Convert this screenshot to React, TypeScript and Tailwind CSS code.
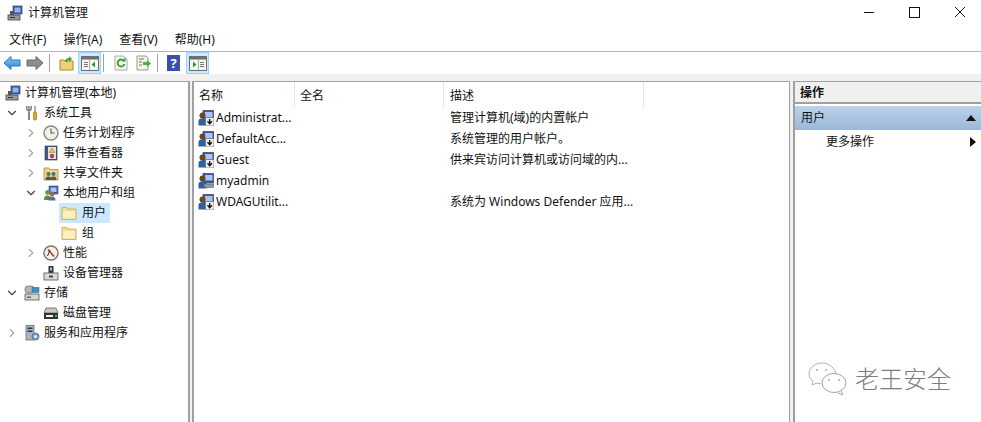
import React from "react";
import { ChevronDown, ChevronRight } from "lucide-react";

const FONT = "font-['Noto_Sans','Noto_Sans_CJK_SC',sans-serif]";

function MmcIcon({ size = 16 }: { size?: number }) {
  return (
    <svg width={size} height={size} viewBox="0 0 16 16" className="shrink-0">
      <rect x="6" y="1" width="9" height="8" fill="#2b4fb8" stroke="#555" strokeWidth="0.8" />
      <rect x="7.5" y="2.5" width="6" height="5" fill="#8fb4ee" />
      <rect x="1" y="10" width="12" height="5" fill="#9a9a9a" stroke="#444" strokeWidth="0.8" />
      <rect x="3" y="6" width="4" height="4" fill="#555" />
      <rect x="3" y="12" width="5" height="1" fill="#333" />
    </svg>
  );
}

function UserIcon({ down = true }: { down?: boolean }) {
  return (
    <svg width="16" height="16" viewBox="0 0 16 16" className="shrink-0">
      <rect x="5" y="0.500" width="10.500" height="9.500" fill="#2f57c0" stroke="#444" strokeWidth="0.7" />
      <rect x="7" y="2" width="7.500" height="5.500" fill="#a9c6f2" />
      <circle cx="4.500" cy="5.500" r="3" fill="#6e4522" />
      <path d="M0.500 15.500v-4.500c0-2 1.700-2.800 4-2.800S8.500 9 8.500 11v4.500z" fill="#2f5f9e" />
      {down ? (
        <>
          <rect x="7.500" y="7.500" width="8.500" height="8.500" rx="1" fill="#efefef" stroke="#666" strokeWidth="0.7" />
          <path d="M11.700 9v4.500M9.500 11.300l2.200 2.500 2.200-2.500" stroke="#111" strokeWidth="1.300" fill="none" />
        </>
      ) : (
        <rect x="6" y="11" width="9.500" height="3.500" fill="#999" stroke="#555" strokeWidth="0.6" />
      )}
    </svg>
  );
}

function FolderIcon() {
  return (
    <svg width="16" height="14" viewBox="0 0 16 14" className="shrink-0">
      <path d="M1 1.500h5l1 1.500h8v10.500H1z" fill="#f5dc95" stroke="#d0b36a" strokeWidth="1" />
      <path d="M2 5h12v7.500H2z" fill="#fcefc4" />
    </svg>
  );
}

function TreeIcon({ kind }: { kind: string }) {
  if (kind === "root") return <MmcIcon />;
  if (kind === "folder") return <FolderIcon />;
  return (
    <svg width="16" height="16" viewBox="0 0 16 16" className="shrink-0">
      {kind === "tools" && (
        <>
          <path d="M5 1v6M3 1c-1 2 0 4 2 5 2-1 3-3 2-5" stroke="#777" strokeWidth="1.200" fill="#ddd" />
          <rect x="4" y="7" width="2" height="8" fill="#888" />
          <path d="M11 1v6" stroke="#999" strokeWidth="1.600" />
          <rect x="9.500" y="7" width="3" height="8" rx="1" fill="#e8a912" stroke="#8a6508" strokeWidth="0.600" />
        </>
      )}
      {kind === "clock" && (
        <>
          <circle cx="8" cy="8" r="7" fill="#f2efe6" stroke="#8a8a80" strokeWidth="1.400" />
          <path d="M8 3.500V8h3.500" stroke="#555" strokeWidth="1.100" fill="none" />
        </>
      )}
      {kind === "event" && (
        <>
          <rect x="2" y="1" width="12" height="14" fill="#3e5a90" stroke="#333" strokeWidth="0.600" />
          <rect x="5" y="2" width="8" height="12" fill="#dde3ee" />
          <path d="M9 3l3 4.500H6z" fill="#f2c21a" stroke="#8a6d08" strokeWidth="0.400" />
          <circle cx="9" cy="11" r="2.200" fill="#c63a3a" />
        </>
      )}
      {kind === "share" && (
        <>
          <path d="M1 3h5l1 1.500h8V15H1z" fill="#ecd28a" stroke="#a98c46" strokeWidth="0.800" />
          <circle cx="5.500" cy="9" r="2" fill="#3f7f4a" />
          <circle cx="10.500" cy="9" r="2" fill="#3f6f9f" />
          <path d="M2.500 15c0-3 1.500-3.500 3-3.500s3 .5 3 3.500zM7.500 15c0-3 1.500-3.500 3-3.500s3 .5 3 3.500z" fill="#555" />
        </>
      )}
      {kind === "users" && (
        <>
          <rect x="6" y="1" width="9" height="8" fill="#2f57c0" stroke="#555" strokeWidth="0.600" />
          <rect x="7.500" y="2.500" width="6" height="4.500" fill="#a9c6f2" />
          <circle cx="4.500" cy="7.500" r="2.400" fill="#6a9a5a" />
          <circle cx="9" cy="9" r="2.400" fill="#9a6a3a" />
          <path d="M1 15c0-3.500 1.500-4.500 3.500-4.500S8 11.500 8 15z" fill="#5c8a50" />
          <path d="M5.500 15.500c0-3 1.500-4 3.500-4s3.500 1 3.500 4z" fill="#5b6f95" />
        </>
      )}
      {kind === "perf" && (
        <>
          <circle cx="8" cy="8" r="7" fill="#f4f1e8" stroke="#77736a" strokeWidth="1.400" />
          <path d="M5 4.500l6 7" stroke="#c92e2e" strokeWidth="1.600" />
          <path d="M4.500 11l2.500-6" stroke="#333" strokeWidth="1" />
        </>
      )}
      {kind === "device" && (
        <>
          <rect x="5.500" y="1" width="5" height="7" fill="#333" />
          <rect x="7" y="2.500" width="2" height="3" fill="#bbb" />
          <rect x="1" y="8" width="14" height="7" fill="#d8d8d8" stroke="#555" strokeWidth="0.800" />
          <rect x="6" y="10.500" width="4" height="2" fill="#444" />
        </>
      )}
      {kind === "storage" && (
        <>
          <rect x="1" y="1" width="9" height="7" rx="3" fill="#b8b8b0" stroke="#666" strokeWidth="0.700" />
          <rect x="8" y="2.500" width="7" height="5" fill="#3b8fcf" stroke="#456" strokeWidth="0.500" />
          <rect x="1" y="9" width="14" height="6" fill="#d4d4d0" stroke="#555" strokeWidth="0.800" />
          <rect x="3" y="11.500" width="4" height="1.500" fill="#666" />
        </>
      )}
      {kind === "disk" && (
        <>
          <path d="M3 3h10l2 5H1z" fill="#c9c9c9" stroke="#555" strokeWidth="0.700" />
          <rect x="1" y="8" width="14" height="6" fill="#333" />
          <rect x="3" y="10" width="7" height="2" fill="#eee" />
          <rect x="12" y="10" width="2" height="2" fill="#3fbf3f" />
        </>
      )}
      {kind === "service" && (
        <>
          <rect x="2" y="0.500" width="8" height="14.500" fill="#a9b4c2" stroke="#566" strokeWidth="0.700" />
          <rect x="3.500" y="2.500" width="5" height="1.500" fill="#334" />
          <rect x="3.500" y="5.500" width="5" height="1.500" fill="#334" />
          <circle cx="11.500" cy="11.500" r="3.500" fill="#7da4cf" stroke="#44658a" strokeWidth="0.800" />
          <circle cx="11.500" cy="11.500" r="1.200" fill="#fff" />
        </>
      )}
    </svg>
  );
}

type Node = { label: string; icon: string; level: number; arrow?: "open" | "closed"; selected?: boolean };

const tree: Node[] = [
  { label: "计算机管理(本地)", icon: "root", level: 0 },
  { label: "系统工具", icon: "tools", level: 1, arrow: "open" },
  { label: "任务计划程序", icon: "clock", level: 2, arrow: "closed" },
  { label: "事件查看器", icon: "event", level: 2, arrow: "closed" },
  { label: "共享文件夹", icon: "share", level: 2, arrow: "closed" },
  { label: "本地用户和组", icon: "users", level: 2, arrow: "open" },
  { label: "用户", icon: "folder", level: 3, selected: true },
  { label: "组", icon: "folder", level: 3 },
  { label: "性能", icon: "perf", level: 2, arrow: "closed" },
  { label: "设备管理器", icon: "device", level: 2 },
  { label: "存储", icon: "storage", level: 1, arrow: "open" },
  { label: "磁盘管理", icon: "disk", level: 2 },
  { label: "服务和应用程序", icon: "service", level: 1, arrow: "closed" },
];

const users = [
  { name: "Administrat...", desc: "管理计算机(域)的内置帐户", down: true },
  { name: "DefaultAcc...", desc: "系统管理的用户帐户。", down: true },
  { name: "Guest", desc: "供来宾访问计算机或访问域的内...", down: true },
  { name: "myadmin", desc: "", down: false },
  { name: "WDAGUtilit...", desc: "系统为 Windows Defender 应用...", down: true },
];

function TreeRow({ node }: { node: Node }) {
  const pad = ["pl-[5px]", "pl-[5px]", "pl-[24px]", "pl-[60px]"][node.level];
  return (
    <div className={`flex h-5 items-center ${pad}`}>
      {node.level > 0 && node.level < 3 && (
        <span className="flex w-[19px] shrink-0 items-center">
          {node.arrow === "open" && <ChevronDown size={14} strokeWidth={2} className="text-[#444]" />}
          {node.arrow === "closed" && <ChevronRight size={14} strokeWidth={2} className="text-[#a6a6a6]" />}
        </span>
      )}
      {node.selected ? (
        <div className="-ml-px flex h-5 items-center gap-[5px] bg-[#cce8ff] pr-1 pl-[2px]">
          <TreeIcon kind={node.icon} />
          <span>{node.label}</span>
        </div>
      ) : (
        <div className={`flex items-center ${node.level === 3 ? "gap-[5px] pl-px" : "gap-1"}`}>
          <TreeIcon kind={node.icon} />
          <span>{node.label}</span>
        </div>
      )}
    </div>
  );
}

function ToolbarSeparator({ className }: { className: string }) {
  return <div className={`h-[18px] w-px bg-[#a0a0a0] ${className}`} />;
}

function ToolButton({ active, className, children }: { active?: boolean; className?: string; children: React.ReactNode }) {
  return (
    <div className={`flex h-[22px] w-[23px] items-center justify-center ${active ? "border border-[#99d1ff] bg-[#cce8ff]" : ""} ${className ?? ""}`}>
      {children}
    </div>
  );
}

function WindowGlyph({ side }: { side: "left" | "right" }) {
  return (
    <svg width="18" height="15" viewBox="0 0 18 15">
      <rect x="0.500" y="0.500" width="17" height="14" fill="#f6f6f2" stroke="#6f6f6f" />
      <rect x="1" y="1" width="16" height="2.500" fill="#6d6d6d" />
      {side === "left" ? (
        <>
          <path d="M3 6.500h4M3 8.500h4M3 10.500h4" stroke="#777" />
          <path d="M14 5.500v6l-3.500-3z" fill="#2e9a48" />
          <path d="M8.500 4v10" stroke="#aaa" />
        </>
      ) : (
        <>
          <path d="M11 6.500h4M11 8.500h4M11 10.500h4" stroke="#777" />
          <path d="M4 5.500v6l3.500-3z" fill="#2e9a48" />
          <path d="M9.500 4v10" stroke="#aaa" />
        </>
      )}
    </svg>
  );
}

export default function App() {
  return (
    <div className={`flex h-[422px] w-[981px] flex-col overflow-hidden bg-white text-[12px] text-[#111] ${FONT}`}>
      {/* Title bar */}
      <div className="flex h-[29px] shrink-0 items-start pl-[7px]">
        <div className="mt-1 flex items-center">
          <MmcIcon />
          <span className="ml-[5px] mt-px leading-4">计算机管理</span>
        </div>
        <div className="ml-auto flex">
          <svg width="46" height="24" viewBox="0 0 46 24">
            <path d="M21 12.500h10" stroke="#111" />
          </svg>
          <svg width="46" height="24" viewBox="0 0 46 24">
            <rect x="20.500" y="7.500" width="10" height="10" fill="none" stroke="#111" />
          </svg>
          <svg width="46" height="24" viewBox="0 0 46 24">
            <path d="M20 7l10 10M30 7L20 17" stroke="#111" />
          </svg>
        </div>
      </div>

      {/* Menu */}
      <div className="flex h-[23px] shrink-0 items-center gap-[17px] border-b border-[#b4b4c0] pl-[9px]">
        <span>文件(F)</span>
        <span>操作(A)</span>
        <span>查看(V)</span>
        <span>帮助(H)</span>
      </div>

      {/* Toolbar */}
      <div className="flex h-[22px] shrink-0 items-center pl-[3px]">
        <svg width="18" height="16" viewBox="0 0 18 16" className="mr-[5px]">
          <defs>
            <linearGradient id="backFill" x1="0" y1="0" x2="0" y2="1">
              <stop offset="0" stopColor="#8cc8f5" />
              <stop offset="1" stopColor="#2a86d8" />
            </linearGradient>
          </defs>
          <path d="M1 8l7-6.500v3.500h9v6H8v3.500z" fill="url(#backFill)" stroke="#2a78bd" />
        </svg>
        <svg width="18" height="16" viewBox="0 0 18 16">
          <path d="M17 8l-7-6.500v3.500H1v6h9v3.500z" fill="#8d8d8d" stroke="#6a6a6a" />
        </svg>
        <ToolbarSeparator className="mx-[5px]" />
        <svg width="15" height="16" viewBox="0 0 15 16" className="ml-[4px] mr-[4px]">
          <path d="M1 5h4l1 1h8v9H1z" fill="#efcf78" stroke="#a98a38" />
          <path d="M6 7c0-3 2-4 4-4V1l3 3-3 3V5c-1 0-2 .5-2 2z" fill="#4c9a3a" />
        </svg>
        <ToolButton active><WindowGlyph side="left" /></ToolButton>
        <ToolbarSeparator className="ml-[2px]" />
        <svg width="16" height="16" viewBox="0 0 16 16" className="ml-[9px]">
          <path d="M2 1h8l4 3v11H2z" fill="#f6f6f0" stroke="#aaa" />
          <path d="M11 6a3.500 3.500 0 1 0 .5 3" fill="none" stroke="#3a9a3a" strokeWidth="1.800" />
          <path d="M8.500 6.500h4v-4z" fill="#3a9a3a" />
        </svg>
        <svg width="17" height="16" viewBox="0 0 17 16" className="ml-[6px]">
          <path d="M2 1h9l2 2v12H2z" fill="#f6f3e4" stroke="#999" />
          <path d="M4 4h5M4 7h3M4 10h3" stroke="#777" />
          <path d="M8 7h4V5l4 3.500-4 3.500v-2H8z" fill="#52ae3e" />
        </svg>
        <ToolbarSeparator className="ml-[5px]" />
        <div className="ml-[9px] flex h-[16px] w-[13px] items-center justify-center bg-[#3a4fa8] text-[13px] font-bold leading-none text-white">?</div>
        <ToolButton active className="ml-[6px]"><WindowGlyph side="right" /></ToolButton>
      </div>

      {/* Main panes */}
      <div className="flex min-h-0 flex-1 bg-[#f0f0f0] pt-[7px]">
        <div className="w-[190px] shrink-0 overflow-hidden border-t border-r-2 border-[#a0a0a0] bg-white pt-px">
          {tree.map((node) => (
            <TreeRow key={node.label} node={node} />
          ))}
        </div>
        <div className="ml-[2px] w-[598px] shrink-0 border-t border-r border-l-2 border-[#a0a0a0] bg-white">
          <div className="flex h-[25px] items-center">
            <div className="flex h-full w-[101px] items-center border-r border-[#e5e5e5] pt-[2px] pl-[5px]">名称</div>
            <div className="flex h-full w-[149px] items-center border-r border-[#e5e5e5] pt-[2px] pl-[5px]">全名</div>
            <div className="flex h-full w-[200px] items-center border-r border-[#e5e5e5] pt-[2px] pl-[6px]">描述</div>
          </div>
          {users.map((u) => (
            <div key={u.name} className="flex h-[21px] items-center">
              <div className="flex w-[101px] items-center gap-[2px] pl-[4px]">
                <UserIcon down={u.down} />
                <span className="whitespace-nowrap text-[#111]">{u.name}</span>
              </div>
              <div className="w-[149px]" />
              <div className="whitespace-nowrap pl-[6px]">{u.desc}</div>
            </div>
          ))}
        </div>
        <div className="ml-[3px] min-w-0 flex-1 border-t border-l-2 border-[#a0a0a0] bg-white">
          <div className="flex h-[22px] items-center border-b-2 border-[#a0a0a0] bg-[#f0f0f0] pt-[2px] pl-[5px] font-bold">操作</div>
          <div className="mt-[2px] flex h-[24px] items-center justify-between bg-gradient-to-b from-[#bcd3ea] to-[#9ab8d8] pr-[4px] pl-[6px]">
            <span>用户</span>
            <svg width="12" height="8" viewBox="0 0 12 8"><path d="M1 7l5-6 5 6z" fill="#111" /></svg>
          </div>
          <div className="flex h-[24px] items-center justify-between pl-[31px] pr-[5px]">
            <span>更多操作</span>
            <svg width="6" height="10" viewBox="0 0 6 10"><path d="M0 0l6 5-6 5z" fill="#111" /></svg>
          </div>
          <div className="mt-[208px] flex items-center pl-[13px]">
            <svg width="39" height="33" viewBox="0 0 39 33" className="shrink-0">
              <path d="M14 1C7 1 1 6 1 12c0 3 2 6 4 7l-1 4 5-2c1 .5 3 .8 4 .8" fill="#fff" stroke="#b0b0b0" />
              <path d="M28 11C25 4 20 1 14 1" fill="none" stroke="#b0b0b0" />
              <ellipse cx="26" cy="21" rx="12" ry="9.500" fill="#fff" stroke="#a0a0a0" />
              <path d="M33 29l2 4-5-2" fill="#fff" stroke="#a0a0a0" />
              <circle cx="9" cy="8" r="1" fill="#aaa" />
              <circle cx="18" cy="8" r="1" fill="#aaa" />
              <circle cx="21" cy="18" r="1" fill="#aaa" />
              <circle cx="31" cy="18" r="1" fill="#aaa" />
            </svg>
            <span className="ml-[8px] whitespace-nowrap text-[24px] leading-none font-light text-[#7d7d7d]">老王安全</span>
          </div>
        </div>
      </div>
    </div>
  );
}
